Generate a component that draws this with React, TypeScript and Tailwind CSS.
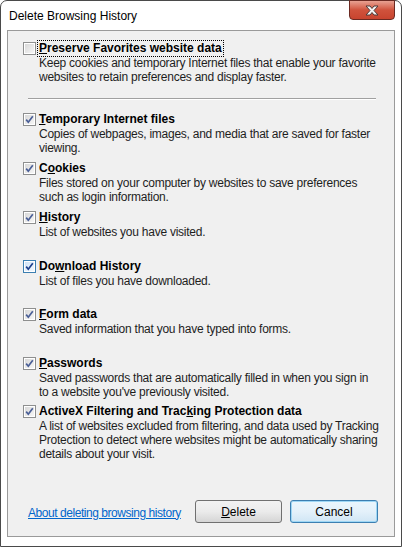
import React from "react";

const font = { fontFamily: '"Segoe UI", "Liberation Sans", Arial, sans-serif' };

const Box = ({ checked, hot }: { checked?: boolean; hot?: boolean }) => (
  <svg width="13" height="13" viewBox="0 0 13 13" className="shrink-0">
    <defs>
      <linearGradient id={hot ? "gh" : "gn"} x1="0" y1="0" x2="1" y2="1">
        <stop offset="0" stopColor={hot ? "#cfe3f7" : "#d8d8d8"} />
        <stop offset="1" stopColor={hot ? "#f4f9fe" : "#f6f6f6"} />
      </linearGradient>
    </defs>
    <rect x="0.5" y="0.5" width="12" height="12" fill="#fff" stroke={hot ? "#3c7fb1" : "#8e8f8f"} />
    <rect x="2" y="2" width="9" height="9" fill={`url(#${hot ? "gh" : "gn"})`} />
    {checked && (
      <path d="M3.2 6.6 L5.3 9.2 L9.8 3.2" fill="none" stroke={hot ? "#1d3f8c" : "#4a5f97"} strokeWidth="1.7" />
    )}
  </svg>
);

const Item = ({
  label,
  desc,
  checked = true,
  hot,
  focus,
  className = "",
}: {
  label: React.ReactNode;
  desc: string[];
  checked?: boolean;
  hot?: boolean;
  focus?: boolean;
  className?: string;
}) => (
  <div className={className}>
    <div className="flex items-center h-[16px]">
      <Box checked={checked} hot={hot} />
      <span
        className={`ml-[2px] font-bold text-[12px] leading-[15px] text-black px-[1px] whitespace-nowrap ${
          focus ? "outline outline-1 outline-dotted outline-black" : ""
        }`}
      >
        {label}
      </span>
    </div>
    <div className="pl-[16px] text-[12px] leading-[14px] tracking-[-0.25px] text-[#1e1e1e] whitespace-nowrap">
      {desc.map((d) => (
        <div key={d}>{d}</div>
      ))}
    </div>
  </div>
);

export default function App() {
  return (
    <div style={font} className="w-[402px] h-[547px] bg-white">
      <div className="w-full h-full flex flex-col bg-white border border-[#4a4a4a] rounded-t-[7px] relative">
        {/* title bar */}
        <div className="h-[29px] flex items-start pl-[8px] pt-[6px] text-[12px] text-black">
          Delete Browsing History
        </div>
        <div className="absolute right-[6px] top-[-1px] w-[46px] h-[20px] rounded-b-[4px] border border-[#6b2a22] bg-gradient-to-b from-[#e8a192] via-[#d0523c] to-[#c8442f] flex items-center justify-center">
          <svg width="16" height="11" viewBox="0 0 16 11">
            <path
              d="M2 1 L6 1 L8 3.5 L10 1 L14 1 L10 5.5 L14 10 L10 10 L8 7.5 L6 10 L2 10 L6 5.5 Z"
              fill="#f4f4f4"
              stroke="#4c3a38"
              strokeWidth="1"
              strokeLinejoin="round"
            />
          </svg>
        </div>

        {/* client panel */}
        <div className="ml-[6px] mr-[6px] mb-[9px] flex-1 flex flex-col bg-[#f0f0f0] border border-[#9a9a9a] pl-[15px] pr-[16px] pt-[9px]">
          <Item
            focus
            checked={false}
            label={
              <>
                <u>P</u>reserve Favorites website data
              </>
            }
            desc={[
              "Keep cookies and temporary Internet files that enable your favorite",
              "websites to retain preferences and display faster.",
            ]}
          />
          <div className="ml-[5px] mr-[2px] mt-[14px] h-px bg-[#a0a0a0] border-b border-white box-content" />
          <Item
            className="mt-[11px]"
            label={
              <>
                <u>T</u>emporary Internet files
              </>
            }
            desc={["Copies of webpages, images, and media that are saved for faster", "viewing."]}
          />
          <Item
            className="mt-[5px]"
            label={
              <>
                C<u>o</u>okies
              </>
            }
            desc={["Files stored on your computer by websites to save preferences", "such as login information."]}
          />
          <Item
            className="mt-[5px]"
            label={
              <>
                <u>H</u>istory
              </>
            }
            desc={["List of websites you have visited."]}
          />
          <Item
            className="mt-[19px]"
            hot
            label={
              <>
                Do<u>w</u>nload History
              </>
            }
            desc={["List of files you have downloaded."]}
          />
          <Item
            className="mt-[18px]"
            label={
              <>
                <u>F</u>orm data
              </>
            }
            desc={["Saved information that you have typed into forms."]}
          />
          <Item
            className="mt-[19px]"
            label={
              <>
                <u>P</u>asswords
              </>
            }
            desc={["Saved passwords that are automatically filled in when you sign in", "to a website you've previously visited."]}
          />
          <Item
            className="mt-[4px]"
            label={
              <>
                ActiveX Filtering and Trac<u>k</u>ing Protection data
              </>
            }
            desc={[
              "A list of websites excluded from filtering, and data used by Tracking",
              "Protection to detect where websites might be automatically sharing",
              "details about your visit.",
            ]}
          />

          {/* footer */}
          <div className="mt-auto mb-[13px] flex items-center">
            <a className="ml-[5px] text-[12px] tracking-[-0.45px] text-[#0066cc] underline mt-[2px] whitespace-nowrap">
              About deleting browsing history
            </a>
            <button className="ml-auto w-[87px] h-[23px] rounded-[3px] border border-[#707070] bg-gradient-to-b from-[#f2f2f2] via-[#ebebeb] to-[#d5d5d5] text-[12px] text-black">
              <u>D</u>elete
            </button>
            <button className="ml-[8px] w-[88px] h-[23px] rounded-[3px] border border-[#3c7fb1] bg-gradient-to-b from-[#eaf6fd] via-[#e4f1fa] to-[#d0e6f5] text-[12px] text-black shadow-[inset_0_0_0_1px_#9ed7f5]">
              Cancel
            </button>
          </div>
        </div>
      </div>
    </div>
  );
}
